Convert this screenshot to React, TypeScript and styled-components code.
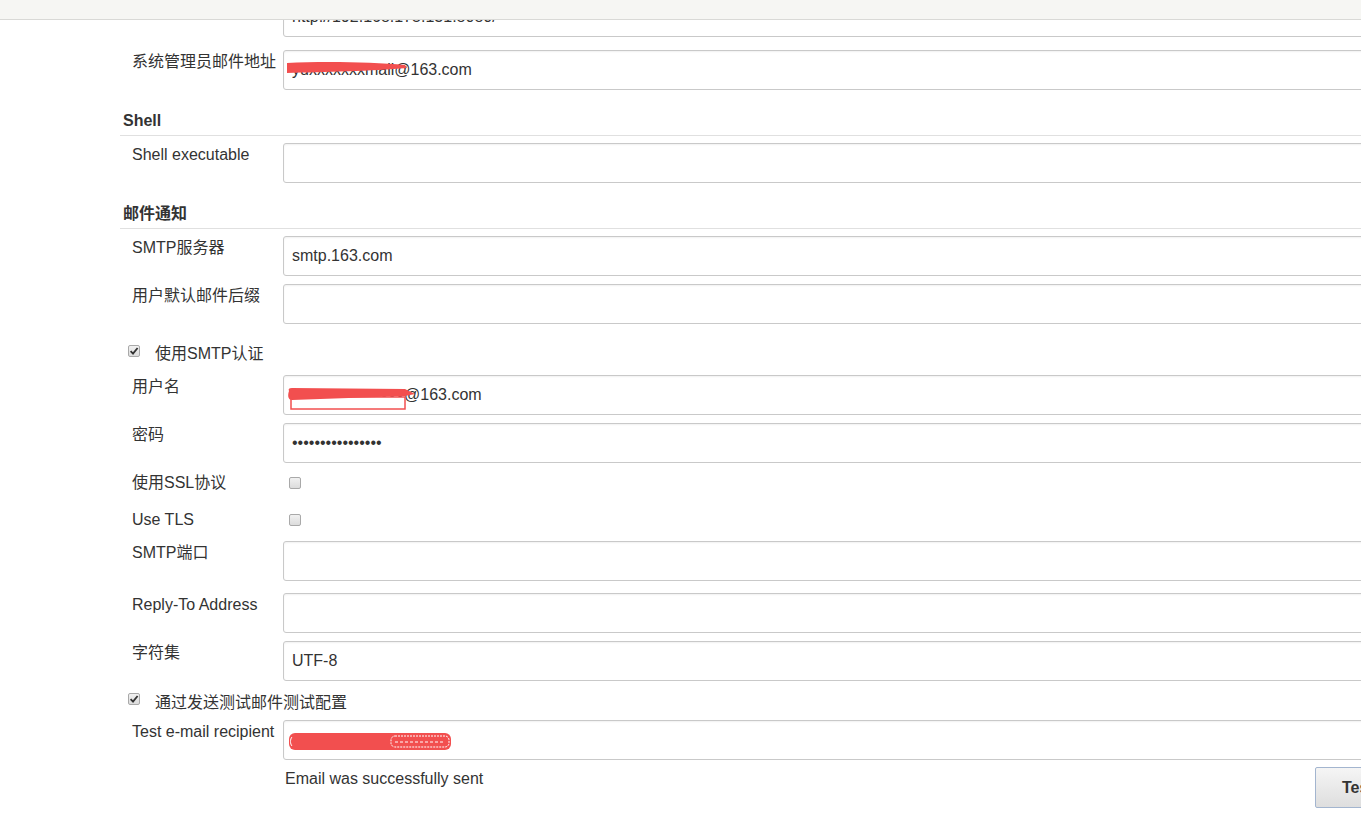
import styled, { createGlobalStyle } from "styled-components";

const GlobalStyle = createGlobalStyle`
  html, body {
    margin: 0;
    padding: 0;
    background: #fff;
    overflow: hidden;
  }
  body {
    font-family: "Liberation Sans", Arial, "Noto Sans CJK SC", sans-serif;
    font-size: 16px;
    color: #333;
  }
`;

const TopBar = styled.div`
  position: fixed;
  top: 0;
  left: 0;
  right: 0;
  height: 19px;
  background: #f6f6f3;
  border-bottom: 1px solid #d9d9d6;
  z-index: 10;
`;

const Page = styled.div`
  width: 1395px;
  margin: -3px 0 0 120px;
  display: flex;
  flex-direction: column;
`;

const Row = styled.div<{ $mt?: number; $h?: number }>`
  display: grid;
  grid-template-columns: 151px 1fr;
  padding-left: 12px;
  margin-top: ${p => p.$mt ?? 8}px;
  ${p => (p.$h ? `height: ${p.$h}px;` : "")}
`;

const Label = styled.div<{ $pt?: number }>`
  height: 20px;
  line-height: 20px;
  padding-top: ${p => p.$pt ?? 2}px;
  color: #333;
  white-space: nowrap;
`;

const Field = styled.div`
  position: relative;
`;

const Input = styled.input`
  box-sizing: border-box;
  width: 100%;
  height: 40px;
  padding: 0 8px;
  border: 1px solid #c9c9c9;
  border-radius: 3px;
  background: #fff;
  box-shadow: inset 0 1px 2px rgba(0, 0, 0, 0.06);
  font-family: inherit;
  font-size: 16px;
  color: #333;
  outline: none;
`;

const Section = styled.div<{ $mt?: number }>`
  margin-top: ${p => p.$mt ?? 20}px;
  height: 19px;
  padding: 1px 0 5px 3px;
  line-height: 20px;
  font-weight: bold;
  color: #333;
  border-bottom: 1px solid #e0e0e0;
`;

const CheckRow = styled.div<{ $mt?: number }>`
  display: flex;
  align-items: flex-start;
  gap: 15px;
  height: 20px;
  padding-left: 8px;
  margin-top: ${p => p.$mt ?? 8}px;
  line-height: 20px;
`;

const Box = styled.span<{ $top?: number; $left?: number }>`
  box-sizing: border-box;
  width: 12px;
  height: 12px;
  margin-top: ${p => p.$top ?? 1}px;
  margin-left: ${p => p.$left ?? 0}px;
  border: 1px solid #a9a9a9;
  border-radius: 2px;
  background: linear-gradient(#f1f1f1, #dcdcdc);
  display: inline-flex;
  align-items: center;
  justify-content: center;
  flex-shrink: 0;
`;

const Check = ({ checked, top, left }: { checked?: boolean; top?: number; left?: number }) => (
  <Box $top={top} $left={left}>
    {checked && (
      <svg width="10" height="10" viewBox="0 0 10 10">
        <path d="M1.6 5.2 L4 7.6 L8.6 2" fill="none" stroke="#333" strokeWidth="1.8" />
      </svg>
    )}
  </Box>
);

const Scribble = styled.svg`
  position: absolute;
  left: 0;
  top: 0;
  pointer-events: none;
`;

const MessageRow = styled.div`
  display: grid;
  grid-template-columns: 151px 1fr 200px;
  padding-left: 12px;
  margin-top: 7px;
  align-items: start;
`;

const Message = styled.div`
  padding: 2px 0 0 2px;
  line-height: 20px;
  color: #333;
`;

const Button = styled.button`
  height: 41px;
  box-sizing: border-box;
  padding: 0 0 0 26px;
  text-align: left;
  border: 1px solid #a3b5cf;
  border-radius: 2px;
  background: linear-gradient(#f5f5f5, #dedede);
  font-family: inherit;
  font-size: 16px;
  font-weight: bold;
  color: #333;
  white-space: nowrap;
  overflow: hidden;
`;

const red = "#f24f4f";

export default function App() {
  return (
    <>
      <GlobalStyle />
      <TopBar />
      <Page>
        <Row $mt={0}>
          <Label />
          <Field><Input readOnly value="http://192.168.175.131:8080/" /></Field>
        </Row>
        <Row $mt={13}>
          <Label>系统管理员邮件地址</Label>
          <Field>
            <Input readOnly value="yuxxxxxxxmail@163.com" />
            <Scribble width="140" height="40">
              <path d="M4 13 C40 11 90 12 122 15 L124 18 C90 21 40 22 4 23 Z" fill={red} />
            </Scribble>
          </Field>
        </Row>

        <Section>Shell</Section>
        <Row $mt={7}>
          <Label>Shell executable</Label>
          <Field><Input readOnly value="" /></Field>
        </Row>

        <Section>邮件通知</Section>
        <Row $mt={7}>
          <Label>SMTP服务器</Label>
          <Field><Input readOnly value="smtp.163.com" /></Field>
        </Row>
        <Row>
          <Label>用户默认邮件后缀</Label>
          <Field><Input readOnly value="" /></Field>
        </Row>

        <CheckRow $mt={20}>
          <Check checked />
          <span>使用SMTP认证</span>
        </CheckRow>
        <Row $mt={11}>
          <Label>用户名</Label>
          <Field>
            <Input readOnly value="yxxxxxxxxxxxxx@163.com" />
            <Scribble width="150" height="40">
              <rect x="8" y="22" width="114" height="12" fill="#fff" stroke={red} strokeWidth="1.5" />
              <path d="M6 16 C5 14 6 13 9 13 L122 14 L132 19 L122 21 L9 25 C6 25 4 22 6 16 Z" fill={red} />
            </Scribble>
          </Field>
        </Row>
        <Row>
          <Label>密码</Label>
          <Field><Input readOnly type="password" value="abcdefghijklmnop" /></Field>
        </Row>

        <Row $mt={8} $h={28}>
          <Label>使用SSL协议</Label>
          <div><Check top={6} left={6} /></div>
        </Row>
        <Row $mt={9} $h={28}>
          <Label>Use TLS</Label>
          <div><Check top={6} left={6} /></div>
        </Row>
        <Row $mt={5}>
          <Label>SMTP端口</Label>
          <Field><Input readOnly value="" /></Field>
        </Row>
        <Row $mt={12}>
          <Label>Reply-To Address</Label>
          <Field><Input readOnly value="" /></Field>
        </Row>
        <Row>
          <Label>字符集</Label>
          <Field><Input readOnly value="UTF-8" /></Field>
        </Row>

        <CheckRow $mt={12}>
          <Check checked top={0} />
          <span>通过发送测试邮件测试配置</span>
        </CheckRow>
        <Row $mt={7}>
          <Label>Test e-mail recipient</Label>
          <Field>
            <Input readOnly value="" />
            <Scribble width="180" height="40">
              <rect x="6" y="13" width="162" height="17" rx="6" fill={red} />
              <rect x="108" y="16" width="58" height="11" rx="4" fill="none" stroke="#fff" strokeWidth="1" strokeDasharray="2 1" />
              <path d="M112 22 H162" stroke="#fff" strokeWidth="1" strokeDasharray="3 2" />
              <path d="M9 17 C7 19 7 24 9 26" stroke="#fff" strokeWidth="1" fill="none" />
            </Scribble>
          </Field>
        </Row>
        <MessageRow>
          <span />
          <Message>Email was successfully sent</Message>
          <Button>Test configuration</Button>
        </MessageRow>
      </Page>
    </>
  );
}
